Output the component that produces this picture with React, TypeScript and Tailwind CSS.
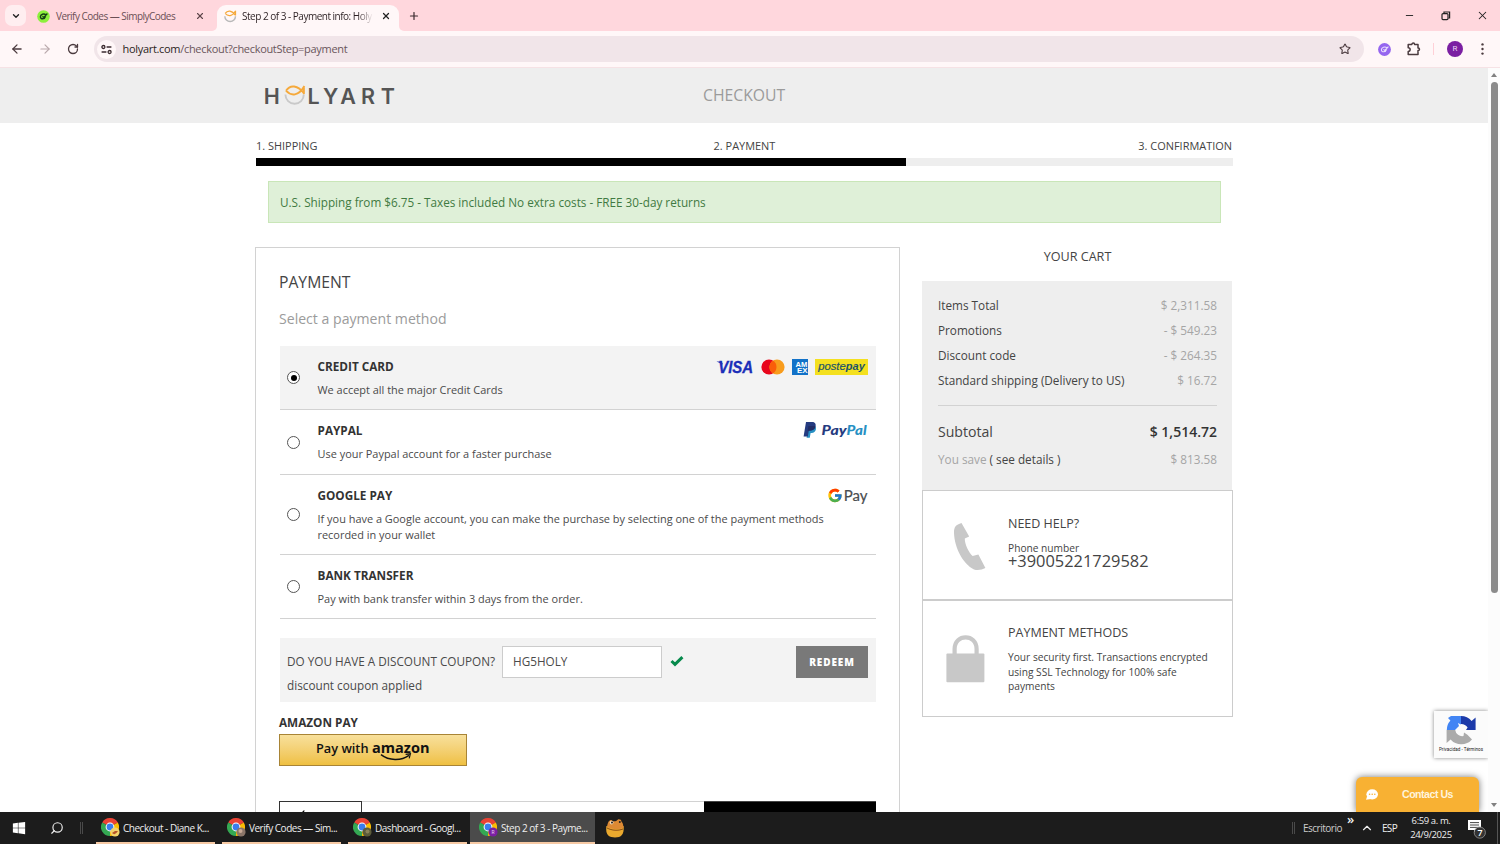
import type { ReactNode } from 'react';
import { ArrowLeft, ArrowRight, ChevronDown, ChevronUp, Minus, Plus, RotateCw, Search, Star, X } from 'lucide-react';
import { FcGoogle } from 'react-icons/fc';
import { FaWindows } from 'react-icons/fa';

interface PaymentMethod {
  title: string;
  description: ReactNode;
  height: string;
  logo?: ReactNode;
  selected?: boolean;
}

const HolyartFish = ({ className }: { className?: string }) => (
  <svg viewBox="0 0 22 22" className={className} fill="none">
    <path d="M1.4 10.5 A9 9 0 0 0 19.4 10.5" stroke="#b9b9b9" strokeWidth="2.4" />
    <path d="M2 5.8 C6 0.2 13 0 19.6 9.2 M2 5.8 C7 11.6 14 11.2 19.8 1.2 M19.4 1.4 V9.4" stroke="#f5a93b" strokeWidth="2.2" />
  </svg>
);

const HolyartLogo = () => (
  <svg width="132" height="26" viewBox="0 0 132 26" fill="none" className="overflow-visible">
    <path d="M20.4 11.6 A9.2 9.2 0 0 0 38.8 11.6" stroke="#c9c9c9" strokeWidth="1.9" />
    <path d="M21 7.7 C25 1.6 32.6 1.6 39.4 11 M21 7.7 C26 13.4 33.6 13.3 39.4 3 M38.9 3.2 V10.8" stroke="#f5a93b" strokeWidth="1.9" />
    <text
      x="-1.2 42.6 58 75.2 96 115.8"
      y="21"
      fill="#555555"
      fontFamily="Inter, sans-serif"
      fontWeight="600"
      fontSize="21.5"
    >
      HLYART
    </text>
  </svg>
);

const ChromeIcon = ({ badge }: { badge: ReactNode }) => (
  <svg width="20" height="20" viewBox="0 0 20 20" className="shrink-0">
    <path d="M9 9 L1.2 4.5 A9 9 0 0 1 16.8 4.5 Z" fill="#ea4335" />
    <path d="M9 9 L1.2 4.5 A9 9 0 0 0 9 18 Z" fill="#34a853" />
    <path d="M9 9 L16.8 4.5 A9 9 0 0 1 9 18 Z" fill="#fbbc04" />
    <path d="M9 5 H17 L16.8 4.5 L9 3 Z" fill="#ea4335" />
    <circle cx="9" cy="9" r="4.4" fill="#fff" />
    <circle cx="9" cy="9" r="3.4" fill="#3b7ded" />
    {badge}
  </svg>
);

const CardLogos = () => (
  <div className="flex translate-y-px items-center">
    <svg width="41" height="16" viewBox="0 0 41 16">
      <path d="M1.5 2.6 H6.6 L8 5.4 Z" fill="#1b2fb8" />
      <text x="3.2" y="13.8" fill="#1b2fb8" stroke="#1b2fb8" strokeWidth="0.3" fontFamily="Liberation Sans, sans-serif" fontWeight="700" fontStyle="italic" fontSize="15.8" textLength="35" lengthAdjust="spacingAndGlyphs">VISA</text>
    </svg>
    <svg width="24" height="16" viewBox="0 0 24 16" className="ml-[5px]">
      <circle cx="8" cy="8" r="7.6" fill="#e8061c" />
      <circle cx="16" cy="8" r="7.6" fill="#f89c1c" />
      <path d="M12 1.6 A7.6 7.6 0 0 1 12 14.4 A7.6 7.6 0 0 1 12 1.6" fill="#fa5d0a" />
    </svg>
    <svg width="16" height="16" viewBox="0 0 16 16" className="ml-[7px]">
      <rect width="16" height="16" fill="#1272c8" />
      <g fill="#fff" fontFamily="Liberation Sans, sans-serif" fontWeight="700" fontSize="7.4">
        <text x="3.6" y="7.8" textLength="11.8" lengthAdjust="spacingAndGlyphs">AM</text>
        <text x="5" y="14" textLength="10.6" lengthAdjust="spacingAndGlyphs">EX</text>
      </g>
    </svg>
    <svg width="53" height="16" viewBox="0 0 53 16" className="ml-[7px]">
      <rect width="53" height="16" fill="#f4e01f" />
      <g fill="#1c5468" fontFamily="Liberation Sans, sans-serif" fontStyle="italic" fontSize="11.4">
        <text x="3.2" y="10.9" stroke="#1c5468" strokeWidth="0.2" textLength="27.6" lengthAdjust="spacingAndGlyphs">poste</text>
        <text x="30.8" y="10.9" fontWeight="700" textLength="19" lengthAdjust="spacingAndGlyphs">pay</text>
      </g>
    </svg>
  </div>
);

const PaypalLogo = () => (
  <svg width="65" height="18" viewBox="0 0 65 18">
    <path d="M5.5 5 H12 C13.8 6.6 13.4 11.6 8.6 12 H7.6 L6.8 16.8 H3.6 Z" fill="#2790c3" />
    <path d="M3 1 H9 C12.6 1 13.4 3.6 12.2 6.6 C11.2 9.2 9 9.8 5.8 9.8 L4.8 15.6 H0.6 Z" fill="#253b80" />
    <path d="M5.4 5 H11.6 C12.2 5 12.5 5.6 12.2 6.6 C11.2 9.2 9 9.8 5.8 9.8 L4.6 10 Z" fill="#222d65" />
    <g fontFamily="Lato, sans-serif" fontWeight="900" fontStyle="italic" fontSize="13.6">
      <text x="18.6" y="14.4" fill="#253b80" textLength="25" lengthAdjust="spacingAndGlyphs">Pay</text>
      <text x="43.6" y="14.4" fill="#2790c3" textLength="20" lengthAdjust="spacingAndGlyphs">Pal</text>
    </g>
  </svg>
);

const GooglePayLogo = () => (
  <div className="flex translate-y-[0.5px] items-center">
    <FcGoogle className="size-[16px]" />
    <svg width="25" height="18" viewBox="0 0 25 18">
      <text x="0.7" y="14.3" fill="#4a4d50" stroke="#4a4d50" strokeWidth="0.2" fontFamily="Lato, sans-serif" fontSize="15.6" textLength="23.8" lengthAdjust="spacingAndGlyphs">Pay</text>
    </svg>
  </div>
);

const methods: PaymentMethod[] = [
  {
    title: 'CREDIT CARD',
    description: 'We accept all the major Credit Cards',
    height: 'h-[64px] bg-[#f3f3f3]',
    logo: <CardLogos />,
    selected: true,
  },
  {
    title: 'PAYPAL',
    description: 'Use your Paypal account for a faster purchase',
    height: 'h-[65px]',
    logo: <PaypalLogo />,
  },
  {
    title: 'GOOGLE PAY',
    description: (
      <>
        If you have a Google account, you can make the purchase by selecting one of the payment methods
        <br />
        recorded in your wallet
      </>
    ),
    height: 'h-[80px]',
    logo: <GooglePayLogo />,
  },
  {
    title: 'BANK TRANSFER',
    description: 'Pay with bank transfer within 3 days from the order.',
    height: 'h-[64px]',
  },
];

const cartRows = [
  { label: 'Items Total', value: '$ 2,311.58' },
  { label: 'Promotions', value: '- $ 549.23' },
  { label: 'Discount code', value: '- $ 264.35' },
  { label: 'Standard shipping (Delivery to US)', value: '$ 16.72' },
];

const tasks = [
  {
    label: 'Checkout - Diane K...',
    badge: (
      <g>
        <circle cx="14" cy="14" r="4.6" fill="#f3d36b" />
        <path d="M11 15 q3 3 6 -2 l-3 0 z" fill="#b5532a" />
      </g>
    ),
  },
  {
    label: 'Verify Codes — Sim...',
    badge: (
      <g>
        <circle cx="14" cy="14" r="4.6" fill="#8a7568" />
        <circle cx="13.5" cy="13" r="2" fill="#c8a995" />
      </g>
    ),
  },
  {
    label: 'Dashboard - Googl...',
    badge: (
      <g>
        <circle cx="14" cy="14" r="4.6" fill="#5c5c3a" />
        <circle cx="14.5" cy="13.5" r="2" fill="#8b8358" />
      </g>
    ),
  },
  {
    label: 'Step 2 of 3 - Payme...',
    active: true,
    badge: (
      <g>
        <circle cx="14" cy="14" r="4.6" fill="#7b1fa2" />
        <text x="12.5" y="15.8" fill="#e5c8f0" fontSize="5" fontFamily="Roboto, sans-serif">R</text>
      </g>
    ),
  },
];

const TabStrip = () => (
  <div className="flex h-[31px] shrink-0 bg-[#ffd7dd] text-[10px] text-[#3b2b2f]">
    <div className="ml-[5px] mt-[5px] flex h-[21px] w-[21px] items-center justify-center rounded-[7px] bg-[#ffeef0]">
      <ChevronDown size={10} strokeWidth={3.2} color="#222" />
    </div>
    <div className="ml-[11px] flex w-[180px] items-center pt-px">
      <svg width="13" height="13" viewBox="0 0 13 13">
        <circle cx="6.5" cy="6.5" r="6.3" fill="#8cf03c" />
        <path d="M9 5 C7 3 3.4 4.4 3.4 6.8 C3.4 9.6 7.8 9.4 8.6 6.4 M5.4 6.4 L6.8 7.4 L10.4 3.6" fill="none" stroke="#174015" strokeWidth="1.4" />
      </svg>
      <span className="ml-[6px] whitespace-nowrap tracking-[-0.53px] text-[#6b4f55]">Verify Codes — SimplyCodes</span>
      <X size={10} strokeWidth={2.6} color="#5d454a" className="ml-auto mr-[12px]" />
    </div>
    <div className="relative mt-[5px] flex h-[26px] w-[182px] items-center rounded-t-[9px] bg-[#fff7f8] pb-[4px]">
      <span className="absolute -left-[5px] bottom-0 size-[5px] overflow-hidden bg-[#fff7f8]">
        <span className="block size-full rounded-br-[5px] bg-[#ffd7dd]" />
      </span>
      <span className="absolute -right-[5px] bottom-0 size-[5px] overflow-hidden bg-[#fff7f8]">
        <span className="block size-full rounded-bl-[5px] bg-[#ffd7dd]" />
      </span>
      <HolyartFish className="ml-[7px] size-[13px]" />
      <span className="ml-[5px] w-[131px] overflow-hidden whitespace-nowrap bg-linear-to-r from-[#2b1f22] from-88% to-transparent bg-clip-text tracking-[-0.5px] text-transparent">
        Step 2 of 3 - Payment info: Holy
      </span>
      <X size={10} strokeWidth={3} color="#222" className="ml-auto mr-[8px]" />
    </div>
    <Plus size={12} strokeWidth={2.4} className="ml-[9px] mt-[10px]" />
    <div className="ml-auto mr-[11px] mt-[9px] flex h-[13px] items-center text-[#222]">
      <Minus size={11} strokeWidth={2} />
      <svg width="10" height="10" viewBox="0 0 10 10" fill="none" stroke="currentColor" className="ml-[26px]">
        <rect x="1" y="2.6" width="6" height="6" rx="1" strokeWidth="1.2" />
        <path d="M3 2.4 V1 H8.6 V7 H7.4" strokeWidth="1.2" />
      </svg>
      <X size={13} strokeWidth={1.9} className="ml-[25px]" />
    </div>
  </div>
);

const Toolbar = () => (
  <div className="flex h-[37px] shrink-0 items-center border-b border-[#f6e2e5] bg-[#fff7f8] text-[#4b3b3f]">
    <ArrowLeft size={14} strokeWidth={2.2} className="ml-[10px]" />
    <ArrowRight size={14} strokeWidth={2} className="ml-[14px] text-[#b9a9ac]" />
    <RotateCw size={12} strokeWidth={2.6} className="ml-[15px]" />
    <div className="ml-[15px] flex h-[26px] w-[1270px] items-center rounded-full bg-[#f1e5e9]">
      <div className="ml-[3px] flex size-[19px] items-center justify-center rounded-full bg-[#fff7f8]">
        <svg width="11" height="11" viewBox="0 0 11 11" fill="none" stroke="#3b2b2f" strokeWidth="1.3">
          <circle cx="2.4" cy="3" r="1.5" />
          <path d="M5.6 3 H10.4 M0.6 8 H5.4" />
          <circle cx="8.6" cy="8" r="1.5" />
        </svg>
      </div>
      <span className="ml-[6.5px] pt-px text-[11px] tracking-[-0.31px] text-[#6a565b]">
        <span className="text-[#2b1f22]">holyart.com</span>/checkout?checkoutStep=payment
      </span>
      <Star size={12} strokeWidth={2.2} className="ml-auto mr-[13px]" />
    </div>
    <svg width="13" height="13" viewBox="0 0 13 13" className="ml-[14px]">
      <circle cx="6.5" cy="6.5" r="6.4" fill="#9566ef" />
      <path d="M9 5 C7 3 3.4 4.4 3.4 6.8 C3.4 9.6 7.8 9.4 8.6 6.4 M5.4 6.4 L6.8 7.4 L10.4 3.6" fill="none" stroke="#e9defd" strokeWidth="1.1" />
    </svg>
    <svg width="14" height="14" viewBox="0 0 14 14" fill="none" stroke="currentColor" strokeWidth="1.5" strokeLinejoin="round" className="ml-[16px]">
      <path d="M1.2 2.6 H4.8 C4.8 0.6 7.6 0.6 7.6 2.6 H11 V6 C13 6 13 8.6 11 8.6 V12.4 H1.2 V9.4 C3.8 9.4 3.8 5.8 1.2 5.8 Z" />
    </svg>
    <div className="ml-[12px] h-[12px] w-px bg-[#ffd0d7]" />
    <div className="ml-[13px] flex size-[16px] items-center justify-center rounded-full bg-[#7b1fa2] font-['Roboto',sans-serif] text-[8px] text-[#ead3f2]">R</div>
    <svg width="3" height="12" viewBox="0 0 3 12" fill="currentColor" className="ml-[18px]">
      <circle cx="1.5" cy="1.4" r="1.2" />
      <circle cx="1.5" cy="6" r="1.2" />
      <circle cx="1.5" cy="10.6" r="1.2" />
    </svg>
  </div>
);

const MethodRow = ({ title, description, height, logo, selected }: PaymentMethod) => (
  <div className={`flex border-b border-[#d2d2d2] ${height}`}>
    <div className="ml-[7px] flex size-[13px] items-center justify-center self-center rounded-full border border-[#555] bg-white">
      {selected && <span className="size-[6px] rounded-full bg-black" />}
    </div>
    <div className="ml-[17.5px] flex-1 pt-[12px]">
      <div className="flex h-[16px] items-center justify-between pr-[8px]">
        <span className="text-[11.75px] font-bold leading-[16px] text-[#333]">{title}</span>
        {logo}
      </div>
      <p className="mt-[8px] whitespace-nowrap text-[10.95px] leading-[15.5px] text-[#4a4a4a]">{description}</p>
    </div>
  </div>
);

const PaymentPanel = () => (
  <section className="mt-[24px] h-[620px] w-[645px] shrink-0 border border-[#d2d2d2] bg-white px-[23px]">
    <h2 className="mt-[22px] text-[15.7px] leading-[24px] text-[#444]">PAYMENT</h2>
    <h3 className="mt-[13px] text-[14.1px] leading-[24px] text-[#9b9b9b]">Select a payment method</h3>
    <div className="ml-[1px] mt-[15px] w-[596px]">
      {methods.map((method) => (
        <MethodRow key={method.title} {...method} />
      ))}

      {/* Coupon */}
      <div className="mt-[19px] h-[64px] bg-[#f3f3f3] pl-[7px] pr-[8px] pt-[8px] text-[11.75px] text-[#4a4a4a]">
        <div className="flex h-[32px] items-center">
          <span className="w-[215px] whitespace-nowrap">DO YOU HAVE A DISCOUNT COUPON?</span>
          <div className="flex h-[32px] w-[160px] items-center border border-[#ccc] bg-white pl-[10px]">HG5HOLY</div>
          <svg width="14" height="12" viewBox="0 0 14 12" className="mb-[3px] ml-[8px]">
            <path d="M1.5 6 L5 9.4 L12.4 2.2" fill="none" stroke="#078a4c" strokeWidth="3" />
          </svg>
          <button type="button" className="ml-auto h-[32px] w-[72px] bg-[#797979] text-[10px] font-extrabold tracking-[0.9px] text-white">
            REDEEM
          </button>
        </div>
        <p className="-mt-px leading-[16px]">discount coupon applied</p>
      </div>

      <p className="-ml-px mt-[12px] text-[11.75px] font-bold leading-[16px] text-[#333]">AMAZON PAY</p>
      <button type="button" className="-ml-px mt-[4px] flex h-[32px] w-[188px] items-center border border-[#a88436] bg-linear-to-b from-[#f8e09b] to-[#efc040]">
        <svg width="186" height="30" viewBox="0 0 186 30">
          <text x="36" y="18" fill="#111" fontFamily="Open Sans, sans-serif" fontWeight="600" fontSize="12.5" textLength="52.5" lengthAdjust="spacingAndGlyphs">Pay with</text>
          <text x="92" y="18" fill="#111" fontFamily="Open Sans, sans-serif" fontWeight="700" fontSize="15" textLength="57.5" lengthAdjust="spacingAndGlyphs">amazon</text>
          <path d="M101 19.6 C109 25.8 121 26 129 20.4" fill="none" stroke="#111" strokeWidth="1.5" />
          <path d="M125.6 19.4 L130.4 18.8 L129.2 23.4" fill="none" stroke="#111" strokeWidth="1.2" />
        </svg>
      </button>

      <div className="-ml-px mt-[35px] flex h-[40px]">
        <div className="w-[83px] border border-[#333] pl-[17px]">
          <ArrowLeft size={14} color="#000" className="mt-[6px]" />
        </div>
        <div className="flex-1 border-t border-[#d2d2d2]" />
        <div className="w-[172px] border-t border-[#444] bg-black" />
      </div>
    </div>
  </section>
);

const CartPanel = () => (
  <aside className="ml-[22px] mt-[24px] w-[311px] shrink-0 text-[#444]">
    <h2 className="mt-[1px] text-center text-[12.6px] leading-[18px]">YOUR CART</h2>
    <div className="mt-[15px] h-[209px] w-[310px] bg-[#eee] pl-[16px] pr-[15px] pt-[12px] text-[11.75px]">
      {cartRows.map((row) => (
        <div key={row.label} className="flex h-[25px] justify-between leading-[25px]">
          <span>{row.label}</span>
          <span className="text-[#a5a5a5]">{row.value}</span>
        </div>
      ))}
      <hr className="mt-[12px] border-[#d2d2d2]" />
      <div className="mt-[13px] flex justify-between leading-[26px]">
        <span className="text-[14.1px]">Subtotal</span>
        <span className="text-[14px] font-semibold text-[#333]">$ 1,514.72</span>
      </div>
      <div className="mt-[4px] flex justify-between leading-[20px] text-[#a5a5a5]">
        <span>
          You save <span className="text-[#444]">( see details )</span>
        </span>
        <span>$ 813.58</span>
      </div>
    </div>
    <div className="flex h-[110px] border border-[#ccc] bg-white">
      <svg width="34" height="50" viewBox="0 0 34 50" className="ml-[30px] mt-[31px]">
        <path d="M8.5 1 C3 2.6 0.8 5 1 11 C1.6 26 10 42 21 47.4 C25 48.8 29 47.6 32.4 46 L25.4 32.4 L19.6 34 C15.6 30.6 11.6 22 11.8 16.6 L16.2 14.4 Z" fill="#c8c8c8" />
      </svg>
      <div className="ml-[21px] pt-[23px]">
        <h4 className="text-[12.5px] leading-[20px]">NEED HELP?</h4>
        <p className="mt-[7px] text-[10.2px] leading-[14px]">Phone number</p>
        <p className="text-[16.4px] leading-[12px]">+39005221729582</p>
      </div>
    </div>
    <div className="flex h-[117px] border border-[#ccc] bg-white">
      <svg width="40" height="48" viewBox="0 0 40 48" className="ml-[23px] mt-[34px]">
        <rect x="0.4" y="18.4" width="38" height="28.8" rx="1" fill="#c8c8c8" />
        <path d="M8.6 20 V14 C8.6 -1.6 30.6 -1.6 30.6 14 V20" fill="none" stroke="#c8c8c8" strokeWidth="4.2" />
      </svg>
      <div className="ml-[22px] pt-[22px]">
        <h4 className="text-[12.5px] leading-[20px]">PAYMENT METHODS</h4>
        <p className="mt-[7px] whitespace-nowrap text-[10.2px] leading-[14.5px]">
          Your security first. Transactions encrypted
          <br />
          using SSL Technology for 100% safe
          <br />
          payments
        </p>
      </div>
    </div>
  </aside>
);

const RecaptchaBadge = () => (
  <div className="absolute bottom-[54px] right-0 flex h-[47px] w-[54px] flex-col items-center bg-[#fbfbfb] shadow-[0_0_4px_#888]">
    <svg width="30" height="30" viewBox="0 0 30 30" className="mt-[4px]">
      <path d="M0.8 15 A14.2 14.2 0 0 1 4.4 5.4 L2 3 L5 1 H15 V9.5 L12 8 L13 11 L9 15 Z" fill="#4285f4" />
      <path d="M15 1 A14 14 0 0 1 25.6 6 L29.6 2.6 V15 H20 L21.6 12.6 A7.6 7.6 0 0 0 15 9 Z" fill="#1c3aa9" />
      <path d="M0.6 15 H9.2 A7 7 0 0 0 17.5 21 L18 17.6 L21.4 19.8 L26 24.4 A14 14 0 0 1 4.6 24.4 L0.6 28 Z" fill="#ababab" />
    </svg>
    <span className="mt-[2px] whitespace-nowrap font-['Roboto',sans-serif] text-[4.6px] leading-[6px] text-[#222]">Privacidad - Términos</span>
  </div>
);

const ContactButton = () => (
  <div className="absolute bottom-0 right-[9px] flex h-[35px] w-[123px] items-center rounded-t-[6px] bg-[#f8b133] shadow-[0_0_7px_#777]">
    <svg width="12" height="11" viewBox="0 0 12 11" className="ml-[10px]">
      <ellipse cx="6.2" cy="5.3" rx="5.8" ry="5.1" fill="#fff" />
      <path d="M1.2 7 L0 10.8 L5 10 Z" fill="#fff" />
      <g fill="#f8b133">
        <circle cx="3.6" cy="5.3" r="0.8" />
        <circle cx="6.2" cy="5.3" r="0.8" />
        <circle cx="8.8" cy="5.3" r="0.8" />
      </g>
    </svg>
    <span className="ml-[24px] whitespace-nowrap pt-px font-['Liberation_Sans',sans-serif] text-[10.6px] font-bold tracking-[-0.5px] text-[#fff4dc]">Contact Us</span>
  </div>
);

const Scrollbar = () => (
  <div className="flex w-[12px] shrink-0 flex-col items-center bg-[#fcfcfc]">
    <span className="mt-[5px] border-x-[3.5px] border-b-[4px] border-x-transparent border-b-[#808080]" />
    <span className="mt-[5px] h-[511px] w-[7px] rounded-full bg-[#8b8b8b]" />
    <span className="mb-[5px] mt-auto border-x-[3.5px] border-t-[4px] border-x-transparent border-t-[#808080]" />
  </div>
);

const Taskbar = () => (
  <div className="flex h-[32px] shrink-0 bg-[#1c1c1c] text-[10px] text-[#eee]">
    <FaWindows className="ml-[12px] mt-[9px] size-[14px] text-white" />
    <Search size={14} strokeWidth={2} className="ml-[24px] mt-[9px] -scale-x-100" />
    <span className="ml-[16px] mr-[13px] mt-[10px] h-[12px] w-[3px] border-x border-[#4a4a4a]" />
    {tasks.map((task) => (
      <div key={task.label} className={`flex h-full w-[125px] items-center pb-px ${task.active ? 'ml-[-4px] bg-[#4b4b4b] pl-[9px] shadow-[inset_0_-2px_#f6c9a4]' : 'mr-px bg-[linear-gradient(#f6c9a4,#f6c9a4)] bg-[length:119px_2px] bg-[position:0_100%] bg-no-repeat pl-[5px]'}`}>
        <ChromeIcon badge={task.badge} />
        <span className="ml-[2px] whitespace-nowrap pt-px tracking-[-0.48px]">{task.label}</span>
      </div>
    ))}
    <svg width="20" height="20" viewBox="0 0 20 20" className="ml-[10px] mt-[6px]">
      <path d="M1.4 8 C0 18 5 19.4 10 19.4 C16 19.4 19.4 17 18.6 8 Z" fill="#eaa92e" />
      <path d="M2 9 C3 3 5 1.4 7 2.4 C9 4 11 3.4 13 1.4 C15 1 16.4 2 16.4 3.4 C18 5 18.4 7 18.4 10 C13 12 7 11 2 9 Z" fill="#dd8a34" />
      <path d="M2 10 C7 12.6 13 13 18 11" stroke="#8a4c16" strokeWidth="1" fill="none" />
      <circle cx="6.6" cy="4.6" r="1.9" fill="#f3d7b5" />
      <circle cx="7" cy="4.6" r="1" fill="#222" />
      <circle cx="14.8" cy="4" r="1" fill="#222" />
    </svg>
    <div className="ml-auto flex h-full items-center pr-[2px]">
      <span className="h-[12px] w-[3px] border-x border-[#4a4a4a]" />
      <span className="ml-[8px] w-[40px] pt-px tracking-[-0.5px] text-[#ccc]">Escritorio</span>
      <span className="ml-[4px] w-[9px] self-start text-[13px] font-semibold leading-[14px]">»</span>
      <ChevronUp size={14} strokeWidth={2} className="ml-[4px]" />
      <span className="ml-[8px] w-[16px] pt-px tracking-[-0.7px]">ESP</span>
      <div className="ml-[12px] w-[42px] whitespace-nowrap text-center text-[9.5px] leading-[14px] tracking-[-0.4px]">
        6:59 a. m.
        <br />
        24/9/2025
      </div>
      <svg width="20" height="22" viewBox="0 0 20 22" className="ml-[15px]">
        <path d="M1 3 H14 V13 H9.4 L7 16 V13 H1 Z" fill="#fff" />
        <path d="M3 5.6 H12 M3 8 H12 M3 10.4 H12" stroke="#333" strokeWidth="0.9" />
        <circle cx="12.8" cy="15.6" r="5.6" fill="#333" stroke="#999" strokeWidth="0.8" />
        <text x="10.6" y="18.8" fill="#fff" fontSize="8.8" fontWeight="600" fontFamily="Open Sans, sans-serif">7</text>
      </svg>
      <span className="ml-[10px] h-full w-px bg-[#555]" />
    </div>
  </div>
);

export default function App() {
  return (
    <div className="flex h-[844px] w-[1500px] flex-col overflow-hidden bg-white font-['Open_Sans',sans-serif]">
      <TabStrip />
      <Toolbar />
      <div className="flex min-h-0 flex-1">
        <main className="relative min-w-0 flex-1 overflow-hidden">
          <header className="flex h-[55px] items-center bg-[#eee] pl-[265px]">
            <HolyartLogo />
            <span className="ml-[306px] text-[15.75px] text-[#9b9b9b]">CHECKOUT</span>
          </header>

          {/* Checkout steps */}
          <div className="ml-[256px] w-[977px]">
            <div className="grid h-[35px] grid-cols-3 pt-[15px] text-[10.95px] leading-[16px] text-[#444]">
              <span>1. SHIPPING</span>
              <span className="text-center">2. PAYMENT</span>
              <span className="pr-px text-right">3. CONFIRMATION</span>
            </div>
            <div className="h-[8px] bg-[#eee]">
              <div className="h-full w-[650px] bg-black" />
            </div>
            <div className="ml-[12px] mt-[15px] flex h-[42px] w-[953px] items-center border border-[#c9e6b8] bg-[#dff0d8] pl-[11px] pt-px text-[11.73px] text-[#3f7a42]">
              U.S. Shipping from $6.75 - Taxes included No extra costs - FREE 30-day returns
            </div>
          </div>

          <div className="ml-[255px] flex">
            <PaymentPanel />
            <CartPanel />
          </div>

          <RecaptchaBadge />
          <ContactButton />
        </main>
        <Scrollbar />
      </div>
      <Taskbar />
    </div>
  );
}
